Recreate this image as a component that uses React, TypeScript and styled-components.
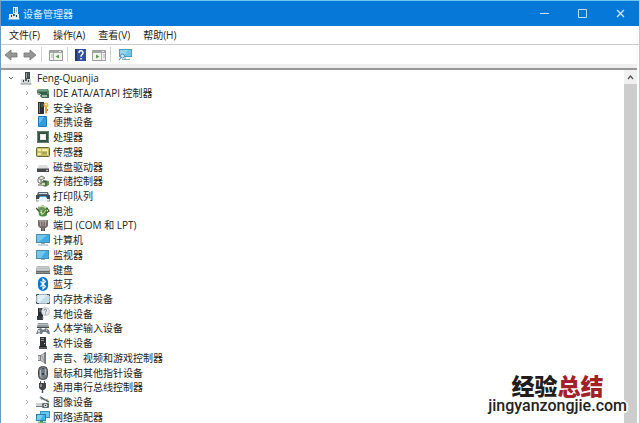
import React from 'react';
import styled, { createGlobalStyle } from 'styled-components';

const GlobalStyle = createGlobalStyle`
  *, *::before, *::after { box-sizing: border-box; }
  html, body, #root { height: 100%; margin: 0; }
  body {
    overflow: hidden;
    background: #a9d5da;
    color: #222;
    font: 10px/14px 'Open Sans', 'Noto Sans CJK SC', sans-serif;
  }
  button { font: inherit; color: inherit; background: none; border: 0; padding: 0; margin: 0; }
  svg { display: block; flex: none; }
`;

const Window = styled.div`
  position: relative;
  display: flex;
  flex-direction: column;
  height: 100vh;
  overflow: hidden;
  margin-right: 1px;
  background: #fff;
  border: solid #6f9ac0;
  border-width: 1px 0 0 1px;
  border-top-color: #6fc5ee;
`;

const TitleBar = styled.header`
  display: flex;
  align-items: center;
  flex: none;
  height: 25px;
  padding-left: 7px;
  gap: 3px;
  background: #0678d7;
  color: #d9f0ff;
`;

const Title = styled.h1`
  flex: 1;
  margin: 0;
  font-size: 10px;
  font-weight: 400;
`;

const ControlGroup = styled.div`
  display: flex;
`;

const WindowButton = styled.button`
  display: flex;
  align-items: center;
  justify-content: center;
  width: 38px;
  height: 25px;
`;

const MenuBar = styled.nav`
  display: flex;
  align-items: center;
  flex: none;
  height: 19px;
  padding-left: 8px;
  gap: 13px;
  border-bottom: 1px solid #ccc;
`;

const ToolBar = styled.div`
  display: flex;
  align-items: center;
  flex: none;
  height: 19px;
  padding-left: 3px;
  gap: 5px;
`;

const ToolSeparator = styled.span`
  width: 1px;
  height: 15px;
  margin: 0 2px 0 -1px;
  background: #d2d2d2;
`;

const Ledge = styled.div`
  flex: none;
  height: 6px;
  margin-right: 2px;
  background: #efefef;
  border-bottom: 2px solid #989898;
`;

const Body = styled.main`
  display: flex;
  flex: 1;
  min-height: 0;
  margin-right: 2px;
`;

const Tree = styled.ul`
  display: grid;
  grid-auto-rows: 1fr;
  flex: 1;
  margin: 0 0 -1px;
  padding: 1px 0 0;
  list-style: none;
`;

const TreeRow = styled.li<{ $level: number }>`
  display: flex;
  align-items: center;
  min-height: 0;
  height: 100%;
  padding-left: ${({ $level }) => 5 + $level * 16}px;
  white-space: nowrap;
`;

const Expander = styled.button`
  display: flex;
  align-items: center;
  justify-content: center;
  width: 10px;
  height: 12px;
  margin-right: 4px;
`;

const RowLabel = styled.span<{ $level: number }>`
  margin-left: ${({ $level }) => ($level ? 3 : 5)}px;
`;

const ScrollBar = styled.div`
  display: flex;
  flex-direction: column;
  width: 13px;
  background: #f0f0f0;
`;

const ScrollButton = styled.button`
  display: flex;
  align-items: center;
  justify-content: center;
  height: 14px;
`;

const ScrollThumb = styled.div`
  flex: 1;
  background: #cdcdcd;
`;

const Watermark = styled.aside`
  position: absolute;
  right: 12px;
  bottom: 9px;
  display: flex;
  flex-direction: column;
  align-items: center;
  text-shadow: 1px 0 #fff, -1px 0 #fff, 0 1px #fff, 0 -1px #fff, 2px 0 #fff, -2px 0 #fff, 0 2px #fff, 0 -2px #fff, 1px 1px #fff, -1px -1px #fff;
  pointer-events: none;
`;

const Brand = styled.strong`
  font: 900 23px/23px 'Noto Sans CJK SC', sans-serif;
  color: #221d1d;
`;

const BrandAccent = styled.span`
  color: #a02127;
`;

const Site = styled.span`
  font: 500 16px/17px Roboto, 'Liberation Sans', sans-serif;
  color: #242222;
`;

type IconProps = { children: React.ReactNode; w?: number; h?: number };
const Svg = ({ children, w = 14, h = 14 }: IconProps) => (
  <svg width={w} height={h} viewBox={`0 0 ${w} ${h}`} fill="none" aria-hidden="true">
    {children}
  </svg>
);

const ComputerIcon = ({ light = false }: { light?: boolean }) => (
  <Svg w={12} h={13}>
    <path d="M5 0h5v7H5z" fill={light ? '#dcebf4' : '#43484c'} />
    <path d="M6 1h1v5H6z" fill={light ? '#4b7694' : '#9da4a8'} />
    <path d="M8 2h1M8 4h1" stroke={light ? '#668ba5' : '#777f84'} />
    <path d="M1 7h10v5H1z" fill={light ? '#e2eaef' : '#d4d7d9'} />
    <path d="M.5 12h11" stroke={light ? '#f5f8fa' : '#8b9093'} />
    <path d="M3 8h1v2H3zM8 8h1v2H8z" fill="#30373c" />
    <path d="M5 7h2v2H5z" fill={light ? '#315d7e' : '#53595d'} />
  </Svg>
);

const IdeIcon = () => (
  <Svg>
    <path d="M1 4l2-1h9l1 2v3H4L1 7z" fill="#57866b" />
    <path d="M2 4h9" stroke="#8eb39d" />
    <path d="M3 6h8v2H3z" fill="#315d43" />
    <path d="M5 8h8v4H6L4 10z" fill="#3e6550" />
    <path d="M6 9h5v2H6z" fill="#9abba2" />
    <path d="M1 7h3v2H2z" fill="#8a9691" />
  </Svg>
);
const SecurityIcon = () => (
  <Svg>
    <path d="M2 1h6v12H2z" fill="#2d3032" />
    <path d="M3 2h1v10H3z" fill="#777d7e" />
    <path d="M5 3h2M5 5h2" stroke="#6b6f71" />
    <circle cx="10" cy="4" r="2.5" fill="#e6ba51" />
    <circle cx="10" cy="3.5" r=".8" fill="#fff" />
    <path d="M9 6h2v6l-1 1-1-1z" fill="#d3a543" />
    <path d="M11 8h1v2h-1z" fill="#a97e29" />
  </Svg>
);
const PortableIcon = () => (
  <Svg>
    <rect x="2" y="1" width="9" height="11" rx="1" fill="#1c78bb" />
    <path d="M3 2h7v9H3z" fill="#319be0" />
    <path d="M3 2h5L3 9z" fill="#6bbcee" />
  </Svg>
);
const ProcessorIcon = () => (
  <Svg>
    <path d="M1 1h12v12H1z" fill="#355443" />
    <path d="M1.5 1.5h11v11h-11z" stroke="#67806c" />
    <path d="M4 4h6v6H4z" fill="#e4e7e3" />
    <path d="M5 5h4v4H5z" fill="#fafafa" />
  </Svg>
);
const SensorIcon = () => (
  <Svg>
    <rect x=".5" y="2.5" width="13" height="9" rx="1" fill="#c6bd67" stroke="#696b36" />
    <path d="M2 4h3v2H2zM6 4h5v2H6zM2 8h3v2H2z" fill="#f4edaa" />
    <path d="M6 7h5v2H6z" fill="#a6a354" />
    <path d="M11.5 4v6" stroke="#eee79c" />
  </Svg>
);
const DiskIcon = () => (
  <Svg>
    <path d="M3 5h8l2 4H1z" fill="#dedede" />
    <path d="M1 8h12v4H1z" fill="#45494b" />
    <path d="M1 8.5h12" stroke="#929696" />
    <path d="M10 10h2v1h-2z" fill="#c5c9c9" />
  </Svg>
);
const StorageIcon = () => (
  <Svg>
    <path d="M2 4l4-2 3 2-4 2z" fill="#e4e6df" stroke="#55594f" strokeWidth=".8" />
    <path d="M2 5v3l3 2 2-2M5 6v3" stroke="#5d6259" />
    <path d="M5 8l3-2 5 1v4l-4 2-4-2z" fill="#6c8b60" />
    <path d="M6 9h3v2H6z" fill="#dfd9a0" />
    <path d="M10 8v4M7 7l4 1" stroke="#36563c" />
    <path d="M2 11h4" stroke="#a7aba0" strokeWidth="2" />
  </Svg>
);
const PrinterIcon = () => (
  <Svg>
    <path d="M2 3h10l1 3H1z" fill="#58656e" />
    <path d="M3 4h8v1H3z" fill="#cbd7dd" />
    <path d="M0 6h14v4h-3L10 8H4l-1 2H0z" fill="#3f4b53" />
    <path d="M4 7h6l1 5H3z" fill="#e4f3fb" />
    <path d="M4 7.5h6" stroke="#4ba1d3" />
    <path d="M1 10l-1 2h3M13 10l1 2h-3" stroke="#8b979e" />
  </Svg>
);
const BatteryIcon = () => (
  <Svg>
    <path d="M2 3l5-2 5 3-2 2-7 1z" fill="#6a9558" />
    <path d="M2 5c2 2 6 2 9-1v7c-2 2-6 2-8 0z" fill="#4a8b42" />
    <path d="M3 3c2-1 5-1 7 1" stroke="#d8dec0" strokeWidth="1.3" />
    <path d="M4 8l3 2 3-4M5 6l1 5" stroke="#d4e7a4" />
    <path d="M0 4l3 3M11 4l2 3-3 2" stroke="#434b38" strokeWidth="1.3" />
  </Svg>
);
const PortIcon = () => (
  <Svg>
    <path d="M2 2h10v6l-2 2H4L2 8z" fill="#756e6c" />
    <path d="M3 3h8" stroke="#c3bcba" />
    <path d="M4.5 3v5M7 3v5M9.5 3v5" stroke="#aaa19f" />
    <path d="M5 10h4v3H5z" fill="#5b5452" />
    <path d="M7 10v3" stroke="#9e9794" />
  </Svg>
);
const MonitorIcon = ({ wide = false }: { wide?: boolean }) => (
  <Svg>
    <path d={wide ? 'M0 1h14v9H0z' : 'M0 2h13v9H0z'} fill="#518cab" />
    <path d={wide ? 'M1 2h12v7H1z' : 'M1 3h11v7H1z'} fill="#41ace4" />
    <path d={wide ? 'M1 2h10L3 9H1z' : 'M1 3h9l-5 7H1z'} fill="#72c7ee" />
    <path d={wide ? 'M5 10.5h4M2 12h10' : 'M5 11.5h4'} stroke="#8caebd" />
  </Svg>
);
const KeyboardIcon = () => (
  <Svg>
    <path d="M1 3h12l1 6v2H0V9z" fill="#666a6d" />
    <path d="M1 3h12l.5 5H.5z" fill="#b9bcbd" />
    <path d="M1 4.5h12M1 6.5h12" stroke="#c9cccd" />
    <path d="M0 9.5h14" stroke="#898e90" />
  </Svg>
);
const BluetoothIcon = () => (
  <Svg>
    <rect x="2" width="10" height="14" rx="5" fill="#0b78cd" />
    <path d="M4.5 4.5l5 5L7 12V2l2.5 2.5-5 5" stroke="#fff" strokeWidth="1.1" />
  </Svg>
);
const MemoryIcon = () => (
  <Svg>
    <path d="M1 2h12v10H1z" fill="#c6dce9" />
    <path d="M2 3h9L3 11H2z" fill="#e3eff6" />
    <path d="M.5 4V2.5H3M11 2.5h2.5V4M.5 10v1.5H3M11 11.5h2.5V10" stroke="#46535c" />
    <path d="M3 2.5h8M3 11.5h8M.5 4v6M13.5 4v6" stroke="#a0b0ba" />
  </Svg>
);
const OtherIcon = () => (
  <Svg>
    <path d="M2 1h5v9H2z" fill="#292d2f" />
    <path d="M3 2h2M3 4h2" stroke="#80878a" />
    <path d="M1 9h6v4H1z" fill="#35393b" />
    <circle cx="9.5" cy="4.5" r="4" fill="#e9ecee" stroke="#abb3b7" strokeWidth=".7" />
    <path d="M8 3.5c0-2 3-1.5 2.5 0-.2.8-1 1-1 2M9.5 6.5v1" stroke="#63747d" strokeWidth=".9" />
    <path d="M6 11h2" stroke="#9ba2a5" />
  </Svg>
);
const HidIcon = () => (
  <Svg>
    <path d="M2 2h10l1 4H1z" fill="#90979a" />
    <path d="M2 3.5h10" stroke="#bcc3c6" />
    <path d="M1 6h12v1H1z" fill="#454d52" />
    <path d="M2 8l3-1 2 2 3-2 3 2 1 4h-2l-2-2H7l-1 2H4l-1-2-1 2H0z" fill="#737c82" />
    <path d="M3 9v2M2 10h2M10 9h1" stroke="#eef0f1" />
  </Svg>
);
const SoftwareIcon = () => (
  <Svg>
    <path d="M4 1h6v9H4z" fill="#303335" />
    <path d="M5 2.5h3M5 4.5h3" stroke="#8f9394" />
    <path d="M8 7h1v1H8z" fill="#c9cccd" />
    <path d="M3 10h8v3H3z" fill="#55595b" />
    <path d="M4 10.5h6" stroke="#222628" />
  </Svg>
);
const SoundIcon = () => (
  <Svg>
    <path d="M2 4h3l4-3v12L5 10H2z" fill="#7c8082" />
    <path d="M2 5h2v4H2zM5 5l3-3v10L5 9z" fill="#c4c7c8" />
    <path d="M9.5 1v12" stroke="#777b7d" />
    <path d="M6 5l2 5" stroke="#999d9f" />
  </Svg>
);
const MouseIcon = () => (
  <Svg>
    <rect x="2.5" y=".5" width="9" height="13" rx="4" fill="#777c80" stroke="#45494d" />
    <path d="M4.5 4v5c0 1.5.5 2.5 1.5 3" stroke="#b8bdc1" />
    <rect x="6" y="2" width="2" height="7" rx="1" fill="#27384b" />
    <path d="M7 3v4" stroke="#d5e2ec" strokeWidth=".8" />
    <path d="M9.5 3v6" stroke="#b1b6b9" />
  </Svg>
);
const UsbIcon = () => (
  <Svg>
    <path d="M4 1h1v3H4zM8 1h1v3H8z" fill="#555" />
    <path d="M3 3h7v5L8 10H5L3 8z" fill="#424445" />
    <path d="M4 4h2v3H4z" fill="#85898b" />
    <path d="M6.5 10v3" stroke="#4f5253" strokeWidth="1.5" />
  </Svg>
);
const ImagingIcon = () => (
  <Svg>
    <path d="M4 2l9 5" stroke="#606466" strokeWidth="1.5" />
    <path d="M4 2l2 3M9 5l3-1" stroke="#9ea3a5" />
    <path d="M0 8h6v3H0z" fill="#cfd2d3" />
    <path d="M0 11.5h7" stroke="#747a7d" />
    <rect x="6" y="8" width="7" height="5" rx="1" fill="#62686b" />
    <circle cx="9.5" cy="10.5" r="1.8" fill="#eceeef" />
    <circle cx="9.5" cy="10.5" r=".8" fill="#34383a" />
  </Svg>
);
const NetworkIcon = () => (
  <Svg>
    <path d="M4 1h10v7H4z" fill="#3c91c1" />
    <path d="M5 2h8v5H5z" fill="#62c7ee" />
    <path d="M0 4h10v7H0z" fill="#2e7ba9" />
    <path d="M1 5h8v5H1z" fill="#3cb2e5" />
    <path d="M1 5h6l-3 5H1z" fill="#73cff0" />
    <path d="M4 11h3v2H4z" fill="#41905a" />
    <path d="M2 12.5h8" stroke="#56ad67" strokeWidth="1.5" />
  </Svg>
);

const ArrowIcon = ({ forward = false }: { forward?: boolean }) => (
  <Svg h={12}>
    <path d={forward ? 'M13 6L7 1v3H1v4h6v3z' : 'M1 6l6-5v3h6v4H7v3z'} fill="#969696" stroke="#747474" strokeWidth=".8" />
  </Svg>
);
const PanelIcon = ({ play = false }: { play?: boolean }) => (
  <Svg h={12}>
    <path d="M.5 1.5h13v10H.5z" fill="#f3f3ee" stroke="#9a9d99" />
    <path d="M1 2h12v2H1z" fill="#a1a5a3" />
    <path d="M10 2.5h2" stroke="#e8e8e8" />
    <path d={play ? 'M9.5 4v7' : 'M4.5 4v7'} stroke="#afb3af" />
    <path d={play ? 'M11 6h2M11 8h2' : 'M2 6h2M2 8h2'} stroke="#b2b6b3" />
    <path d={play ? 'M4 5.5v4L7.5 7.5z' : 'M10 5.5v4L6.5 7.5z'} fill="#5c9b58" />
  </Svg>
);
const HelpIcon = () => (
  <Svg w={12} h={14}>
    <path d="M0 1h11v12H0z" fill="#344f9b" />
    <path d="M0 1h2v12H0z" fill="#253873" />
    <path d="M4 5c0-3 4-2.8 4-.3 0 1.8-2 1.7-2 4" stroke="#fff" strokeWidth="1.5" />
    <path d="M5.3 10h1.5v1.5H5.3z" fill="#fff" />
  </Svg>
);
const ScanIcon = () => (
  <Svg w={15} h={13}>
    <path d="M1 1h13v8H1z" fill="#4f9dbd" />
    <path d="M2 2h11v6H2z" fill="#71c4e4" />
    <path d="M2 2h8L6 8H2z" fill="#91d5ec" />
    <path d="M4 11.5h8M7 9v2" stroke="#7caabd" />
    <circle cx="4.5" cy="8" r="2" fill="#cceaf1" stroke="#4e8ead" />
    <path d="M3 9.5L1 12" stroke="#4686a7" strokeWidth="1.2" />
  </Svg>
);

const devices: { name: string; icon: React.ReactNode }[] = [
  { name: 'IDE ATA/ATAPI 控制器', icon: <IdeIcon /> },
  { name: '安全设备', icon: <SecurityIcon /> },
  { name: '便携设备', icon: <PortableIcon /> },
  { name: '处理器', icon: <ProcessorIcon /> },
  { name: '传感器', icon: <SensorIcon /> },
  { name: '磁盘驱动器', icon: <DiskIcon /> },
  { name: '存储控制器', icon: <StorageIcon /> },
  { name: '打印队列', icon: <PrinterIcon /> },
  { name: '电池', icon: <BatteryIcon /> },
  { name: '端口 (COM 和 LPT)', icon: <PortIcon /> },
  { name: '计算机', icon: <MonitorIcon wide /> },
  { name: '监视器', icon: <MonitorIcon /> },
  { name: '键盘', icon: <KeyboardIcon /> },
  { name: '蓝牙', icon: <BluetoothIcon /> },
  { name: '内存技术设备', icon: <MemoryIcon /> },
  { name: '其他设备', icon: <OtherIcon /> },
  { name: '人体学输入设备', icon: <HidIcon /> },
  { name: '软件设备', icon: <SoftwareIcon /> },
  { name: '声音、视频和游戏控制器', icon: <SoundIcon /> },
  { name: '鼠标和其他指针设备', icon: <MouseIcon /> },
  { name: '通用串行总线控制器', icon: <UsbIcon /> },
  { name: '图像设备', icon: <ImagingIcon /> },
  { name: '网络适配器', icon: <NetworkIcon /> },
];

const WindowButtons = () => (
  <ControlGroup>
    <WindowButton type="button" aria-label="最小化">
      <Svg w={9} h={9}><path d="M0 4.5h9" stroke="#b9e1fb" /></Svg>
    </WindowButton>
    <WindowButton type="button" aria-label="最大化">
      <Svg w={9} h={9}><path d="M.5.5h8v8h-8z" stroke="#b9e1fb" /></Svg>
    </WindowButton>
    <WindowButton type="button" aria-label="关闭">
      <Svg w={9} h={9}><path d="M1 1l7 7M8 1L1 8" stroke="#d3edff" strokeWidth="1.2" /></Svg>
    </WindowButton>
  </ControlGroup>
);

export default function App() {
  return (
    <>
      <GlobalStyle />
      <Window>
        <TitleBar>
          <ComputerIcon light />
          <Title>设备管理器</Title>
          <WindowButtons />
        </TitleBar>
        <MenuBar aria-label="菜单">
          {['文件(F)', '操作(A)', '查看(V)', '帮助(H)'].map((item) => (
            <button key={item} type="button">{item}</button>
          ))}
        </MenuBar>
        <ToolBar role="toolbar">
          <button type="button" aria-label="后退"><ArrowIcon /></button>
          <button type="button" aria-label="前进"><ArrowIcon forward /></button>
          <ToolSeparator />
          <button type="button" aria-label="显示控制台树"><PanelIcon /></button>
          <ToolSeparator />
          <button type="button" aria-label="帮助"><HelpIcon /></button>
          <button type="button" aria-label="操作窗格"><PanelIcon play /></button>
          <ToolSeparator />
          <button type="button" aria-label="扫描硬件改动"><ScanIcon /></button>
        </ToolBar>
        <Ledge />
        <Body>
          <Tree role="tree">
            <TreeRow $level={0} role="treeitem" aria-expanded="true">
              <Expander type="button" aria-label="折叠">
                <Svg w={6} h={4}><path d="M1 1l2 2 2-2" stroke="#666" /></Svg>
              </Expander>
              <ComputerIcon />
              <RowLabel $level={0}>Feng-Quanjia</RowLabel>
            </TreeRow>
            {devices.map(({ name, icon }) => (
              <TreeRow key={name} $level={1} role="treeitem" aria-expanded="false">
                <Expander type="button" aria-label={`展开 ${name}`}>
                  <Svg w={4} h={6}><path d="M1 1l2 2-2 2" stroke="#aaa" /></Svg>
                </Expander>
                {icon}
                <RowLabel $level={1}>{name}</RowLabel>
              </TreeRow>
            ))}
          </Tree>
          <ScrollBar>
            <ScrollButton type="button" aria-label="向上滚动">
              <Svg w={7} h={5}><path d="M1 4l2.5-3L6 4" stroke="#555" strokeWidth="1.3" /></Svg>
            </ScrollButton>
            <ScrollThumb />
          </ScrollBar>
        </Body>
        <Watermark>
          <Brand>经验<BrandAccent>总结</BrandAccent></Brand>
          <Site>jingyanzongjie.com</Site>
        </Watermark>
      </Window>
    </>
  );
}
